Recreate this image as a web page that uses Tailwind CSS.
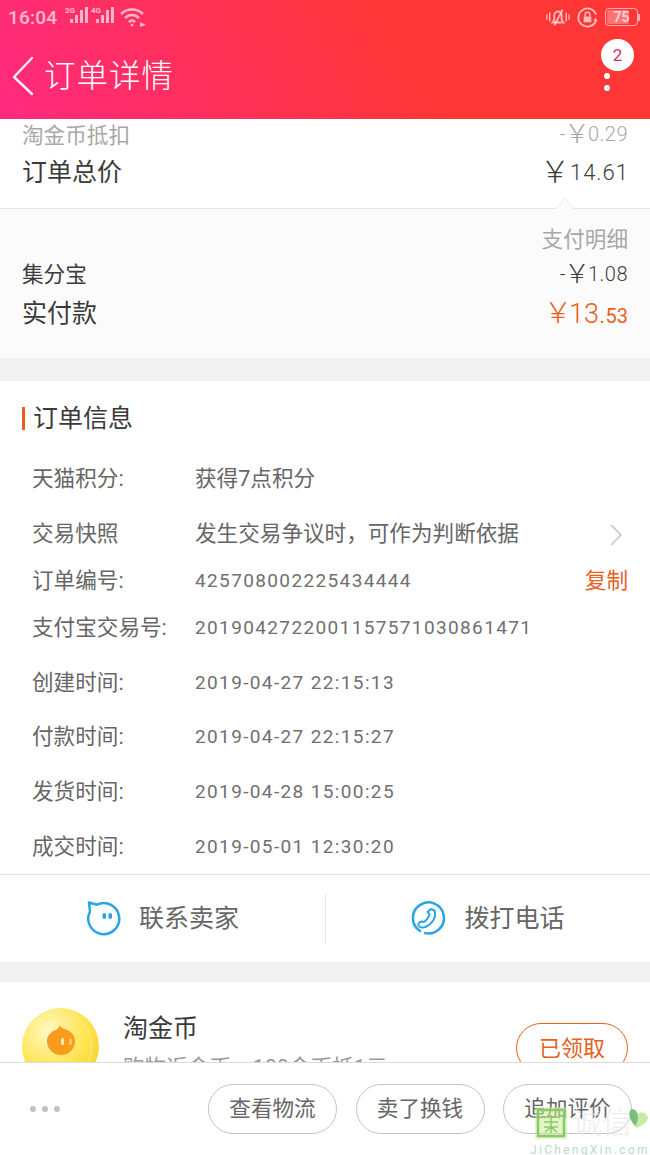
<!DOCTYPE html>
<html lang="zh-CN">
<head>
    <meta charset="UTF-8">
    <meta name="viewport" content="width=device-width, initial-scale=1.0">
    <title>订单详情</title>
    <script src="https://cdn.jsdelivr.net/npm/@tailwindcss/browser@4"></script>
</head>
<body class="bg-white">
<div class="relative w-[650px] h-[1155px] overflow-hidden flex flex-col bg-white text-[#333] font-['Roboto','Noto_Sans_CJK_SC',sans-serif]">

    <!-- header -->
    <header class="h-[119px] shrink-0 flex flex-col bg-linear-[60deg] from-[#ff2a80] to-[#ff3636] to-[62%] text-white">
        <div class="h-[34px] flex items-center justify-between pl-[8px] pr-[10px] text-white/65">
            <div class="flex items-center">
                <span class="text-[19px] leading-none tracking-[0.2px] font-medium">16:04</span>
                <svg class="ml-[7px]" width="26" height="20" viewBox="0 0 26 20" fill="currentColor">
                    <text x="1" y="6" font-size="8" font-weight="700" font-family="Roboto">2G</text>
                    <rect x="6" y="12" width="3" height="4"/><rect x="11" y="8" width="3" height="8"/><rect x="16" y="3" width="3" height="13"/><rect x="21" y="0" width="3" height="16"/>
                </svg>
                <svg width="26" height="20" viewBox="0 0 26 20" fill="currentColor">
                    <text x="1" y="6" font-size="8" font-weight="700" font-family="Roboto">4G</text>
                    <rect x="6" y="12" width="3" height="4"/><rect x="11" y="8" width="3" height="8"/><rect x="16" y="3" width="3" height="13"/><rect x="21" y="0" width="3" height="16"/>
                </svg>
                <svg class="ml-[4px]" width="27" height="20" viewBox="0 0 27 20" fill="none" stroke="currentColor" stroke-width="2.500">
                    <path d="M1 7c6-6 16-6 22 0"/><path d="M5 11c4-4 10-4 14 0"/><path d="M9 15c2-2 4-2 6 0"/>
                    <circle cx="12" cy="18" r="1.500" fill="currentColor" stroke="none"/><path d="M20 15l6 3-6 2z" fill="currentColor" stroke="none"/>
                </svg>
            </div>
            <div class="flex items-center gap-[7px]">
                <svg width="24" height="20" viewBox="0 0 26 20" fill="none" stroke="currentColor" stroke-width="2">
                    <path d="M1 7v6M4 5v10M22 5v10M25 7v6" stroke-width="1.500"/>
                    <path d="M7 16h12l-2-3V8a4 4 0 0 0-8 0v5z"/><path d="M18 2L9 19"/>
                </svg>
                <svg width="21" height="21" viewBox="0 0 22 22" fill="none" stroke="currentColor" stroke-width="2">
                    <path d="M20 14a9.500 9.500 0 1 1 0-6"/><path d="M21 15l-4-1 3-3z" fill="currentColor" stroke="none"/>
                    <rect x="7" y="10" width="8" height="6" fill="currentColor" stroke="none"/><path d="M8.500 10V8a2.500 2.500 0 0 1 5 0v2" stroke-width="1.500"/>
                </svg>
                <div class="flex items-center">
                    <div class="w-[33px] h-[18px] rounded-[4px] border border-white/60 p-[1px] relative flex items-center justify-center">
                        <div class="absolute left-[1px] top-[1px] bottom-[1px] w-[22px] rounded-[2px] bg-white/30"></div>
                        <span class="relative text-[14px] leading-none font-bold">75</span>
                    </div>
                    <div class="w-[2px] h-[7px] bg-white/60"></div>
                </div>
            </div>
        </div>
        <div class="relative flex-1 flex items-center pl-[12px] pb-[1px]">
            <svg width="24" height="40" viewBox="0 0 24 40" fill="none" stroke="white" stroke-opacity="0.9" stroke-width="2.500" stroke-linecap="round" stroke-linejoin="round">
                <path d="M20 2L2 21l18 17"/>
            </svg>
            <h1 class="ml-[8px] pt-[2px] text-[31.5px] leading-none tracking-[1px] font-light text-white">订单详情</h1>
            <div class="absolute right-[40px] top-[39px] flex flex-col items-center gap-[6px]">
                <span class="block w-[6px] h-[6px] rounded-full bg-white"></span>
                <span class="block w-[6px] h-[6px] rounded-full bg-white"></span>
            </div>
            <div class="absolute right-[16px] top-[5px] w-[33px] h-[32px] rounded-full bg-white flex items-center justify-center text-[#d6286e] text-[17px] leading-none">2</div>
        </div>
    </header>

    <main class="flex-1 overflow-hidden flex flex-col">
        <!-- totals -->
        <section class="h-[90px] shrink-0 relative px-[22px] border-b border-[#e6e6e6]">
            <div class="flex justify-between items-center h-[32px] text-[21.6px] text-[#a8a8a8]">
                <span class="pt-[2px]">淘金币抵扣</span>
                <span class="flex items-center tracking-[0.5px] pb-[2px] text-[20px] font-light">-<span class="text-[26px] leading-none -mx-[2px] tracking-normal">￥</span>0.29</span>
            </div>
            <div class="flex justify-between items-center h-[40px] mt-[2px]">
                <span class="text-[25px] text-[#3a3a3a]">订单总价</span>
                <span class="flex items-center text-[22px] pb-[2px] -mr-[1px] tracking-[1px] text-[#3c3c3c] font-light"><span class="text-[30px] leading-none tracking-normal">￥</span>14.61</span>
            </div>
            <div class="absolute right-[75px] -bottom-[1px] w-0 h-0 border-x-[10px] border-x-transparent border-b-[11px] border-b-[#e6e6e6]"></div>
            <div class="absolute right-[76px] -bottom-[1px] w-0 h-0 border-x-[9px] border-x-transparent border-b-[10px] border-b-[#fbfbfb]"></div>
        </section>

        <!-- payment -->
        <section class="h-[149px] shrink-0 bg-[#fbfbfb] px-[22px] pt-[15px]">
            <div class="text-right text-[21.6px] leading-[31px] text-[#a8a8a8]">支付明细</div>
            <div class="flex justify-between items-center h-[41px] text-[#3c3c3c]">
                <span class="text-[21.6px]">集分宝</span>
                <span class="flex items-center text-[20px] pb-[4px] tracking-[0.5px] font-light">-<span class="text-[26px] leading-none -mx-[2px] tracking-normal">￥</span>1.08</span>
            </div>
            <div class="flex justify-between items-center h-[37px] -mt-[1px]">
                <span class="text-[25px] text-[#3a3a3a]">实付款</span>
                <span class="flex items-baseline text-[#e8601c] text-[27px] leading-none font-light"><span class="text-[28px] -mr-[3px]">￥</span>13.<span class="text-[20px] font-normal">53</span></span>
            </div>
        </section>
        <div class="h-[23px] shrink-0 bg-[#f2f2f2]"></div>

        <!-- order info -->
        <section class="h-[493px] shrink-0 flex flex-col">
            <div class="flex items-center h-[75px] shrink-0 px-[22px]">
                <span class="w-[3px] h-[23px] bg-[#e8601c]"></span>
                <h2 class="ml-[8px] text-[25px] text-[#3a3a3a]">订单信息</h2>
            </div>
            <div class="pl-[32px] pr-[22px] text-[21.6px] text-[#666]">
                <div class="flex items-center h-[55px] -mt-[4px]"><span class="w-[163px] shrink-0">天猫积分:</span><span>获得7点积分</span></div>
                <div class="flex items-center h-[55px]">
                    <span class="w-[163px] shrink-0">交易快照</span><span>发生交易争议时，可作为判断依据</span>
                    <svg class="ml-auto mr-[6px]" width="13" height="22" viewBox="0 0 13 22" fill="none" stroke="#c4c4c4" stroke-width="1.500"><path d="M2 1l10 10L2 21"/></svg>
                </div>
                <div class="flex items-center h-[47px] -mt-[4px]"><span class="w-[163px] shrink-0">订单编号:</span><span class="text-[19px] tracking-[1.37px] text-[#707070]">425708002225434444</span><span class="ml-auto text-[#e8601c]">复制</span></div>
                <div class="flex items-center h-[47px]"><span class="w-[163px] shrink-0">支付宝交易号:</span><span class="text-[19px] tracking-[1.37px] text-[#707070]">2019042722001157571030861471</span></div>
                <div class="flex items-center h-[54px] mt-[4px]"><span class="w-[163px] shrink-0">创建时间:</span><span class="text-[19px] tracking-[1.37px] text-[#707070]">2019-04-27 22:15:13</span></div>
                <div class="flex items-center h-[55px]"><span class="w-[163px] shrink-0">付款时间:</span><span class="text-[19px] tracking-[1.37px] text-[#707070]">2019-04-27 22:15:27</span></div>
                <div class="flex items-center h-[55px]"><span class="w-[163px] shrink-0">发货时间:</span><span class="text-[19px] tracking-[1.37px] text-[#707070]">2019-04-28 15:00:25</span></div>
                <div class="flex items-center h-[55px]"><span class="w-[163px] shrink-0">成交时间:</span><span class="text-[19px] tracking-[1.37px] text-[#707070]">2019-05-01 12:30:20</span></div>
            </div>
        </section>

        <!-- contact -->
        <section class="h-[88px] shrink-0 border-t border-[#dedede] flex items-center text-[25px] text-[#666]">
            <div class="flex-1 flex items-center justify-center gap-[18px] pr-[1px]">
                <svg width="36" height="36" viewBox="0 0 36 36" fill="none" stroke="#27a5e6" stroke-width="2.500">
                    <path d="M4 1.500L12 3.700A15.500 15.500 0 1 1 5 10.500z" stroke-linejoin="round"/>
                    <rect x="17.500" y="12" width="3.500" height="6" rx="1.750" fill="#27a5e6" stroke="none"/><rect x="23.500" y="12" width="3.500" height="6" rx="1.750" fill="#27a5e6" stroke="none"/>
                </svg>
                <span>联系卖家</span>
            </div>
            <div class="w-px h-[50px] bg-[#e6e6e6]"></div>
            <div class="flex-1 flex items-center justify-center gap-[17px]">
                <svg width="36" height="36" viewBox="0 0 36 36" fill="none" stroke="#27a5e6" stroke-width="2.500" stroke-linecap="round">
                    <path d="M9 30A15.500 15.500 0 1 1 14 32.100"/>
                    <path d="M20 8l3.500 1.500c2 7-2 13-8 16-3 1.500-7 1.500-8-1-.5-2 1-3.500 3-4l2.500.5c2.500-1.500 4.500-4 5.500-8l-2-2z" stroke-width="2" stroke-linejoin="round"/>
                </svg>
                <span>拨打电话</span>
            </div>
        </section>
        <div class="h-[20px] shrink-0 bg-[#f2f2f2]"></div>

        <!-- coin card, cut off by the footer -->
        <section class="flex-1 min-h-0 overflow-hidden relative pl-[22px] pr-[22px] flex items-start">
            <div class="relative w-[77px] h-[77px] shrink-0 mt-[26px] rounded-full bg-[radial-gradient(circle_at_35%_30%,#fff8c4,#ffe552_50%,#f9c21e_100%)] flex items-center justify-center">
                <div class="absolute inset-[7px] left-[10px] rounded-full border border-[#ffeb8a]"></div>
                <svg class="relative -mt-[14px]" width="30" height="32" viewBox="0 0 30 32">
                    <path d="M14 1c0 2 2 3 7 5 5 2 8 6 8 11 0 8-6 14-14 14S1 25 1 17C1 11 6 7 10 6c2-1 3-3 4-5z" fill="#f99b1c"/>
                    <rect x="15" y="14" width="3" height="7" rx="1.500" fill="#ffe9b8"/><rect x="23" y="14" width="3" height="7" rx="1.500" fill="#ffc46a"/>
                </svg>
            </div>
            <div class="ml-[24px] pt-[29px]">
                <div class="text-[25px] leading-[35px] text-[#3a3a3a]">淘金币</div>
                <div class="text-[21.6px] leading-[28px] mt-[8px] text-[#999] whitespace-nowrap">购物返金币，100金币抵1元</div>
            </div>
            <div class="ml-auto mt-[41px] shrink-0 w-[112px] h-[50px] rounded-full border-[1.5px] border-[#e8601c] text-[#e8601c] text-[22px] flex items-center justify-center">已领取</div>
        </section>
    </main>

    <!-- bottom actions -->
    <footer class="h-[93px] shrink-0 border-t border-[#dcdcdc] bg-white flex items-start pl-[30px] pr-[18px] pt-[21px]">
        <div class="flex gap-[6px] h-[50px] items-center">
            <span class="w-[6px] h-[6px] rounded-full bg-[#c2c2c2]"></span><span class="w-[6px] h-[6px] rounded-full bg-[#c2c2c2]"></span><span class="w-[6px] h-[6px] rounded-full bg-[#c2c2c2]"></span>
        </div>
        <div class="ml-auto flex gap-[18.5px] text-[21.6px] text-[#666]">
            <div class="w-[129px] h-[50px] rounded-full border border-[#c4c4c4] flex items-center justify-center">查看物流</div>
            <div class="w-[129px] h-[50px] rounded-full border border-[#c4c4c4] flex items-center justify-center">卖了换钱</div>
            <div class="w-[129px] h-[50px] rounded-full border border-[#c4c4c4] flex items-center justify-center">追加评价</div>
        </div>
    </footer>

    <!-- watermark over the corner -->
    <div class="absolute left-[530px] top-[1107px] w-[120px] h-[48px] pointer-events-none">
        <svg class="absolute left-[5px] top-0" width="32" height="32" viewBox="0 0 32 32" fill="none">
            <rect x="0" y="0" width="32" height="32" fill="#c9ec9a" fill-opacity="0.55"/>
            <rect x="3" y="3" width="26" height="26" stroke="#8cc963" stroke-width="2.500"/>
            <path d="M9 10h14M9 15h14M9 20h14M16 8v18M10 25l5-4M22 25l-5-4" stroke="#8cc963" stroke-width="1.500"/>
        </svg>
        <span class="absolute left-[42px] -top-[4px] text-[30px] leading-[40px] text-[#e8e8e8]/80 font-light whitespace-nowrap">诚信</span>
        <svg class="absolute left-[97px] top-[1px]" width="23" height="20" viewBox="0 0 22 19"><path d="M3 2c3-2 6 0 7 4 3-3 9-2 10 3 0 5-6 8-11 10C5 14 1 8 3 2z" fill="#c6eaa8"/><path d="M3 2c3-2 6 0 7 4 1 4 0 8-2 11C4 13 1 8 3 2z" fill="#74c078"/></svg>
        <span class="absolute left-0 top-[37px] text-[12px] leading-none tracking-[2.300px] text-[#b4dccb] whitespace-nowrap">JiChengXin.com</span>
    </div>
</div>
</body>
</html>
